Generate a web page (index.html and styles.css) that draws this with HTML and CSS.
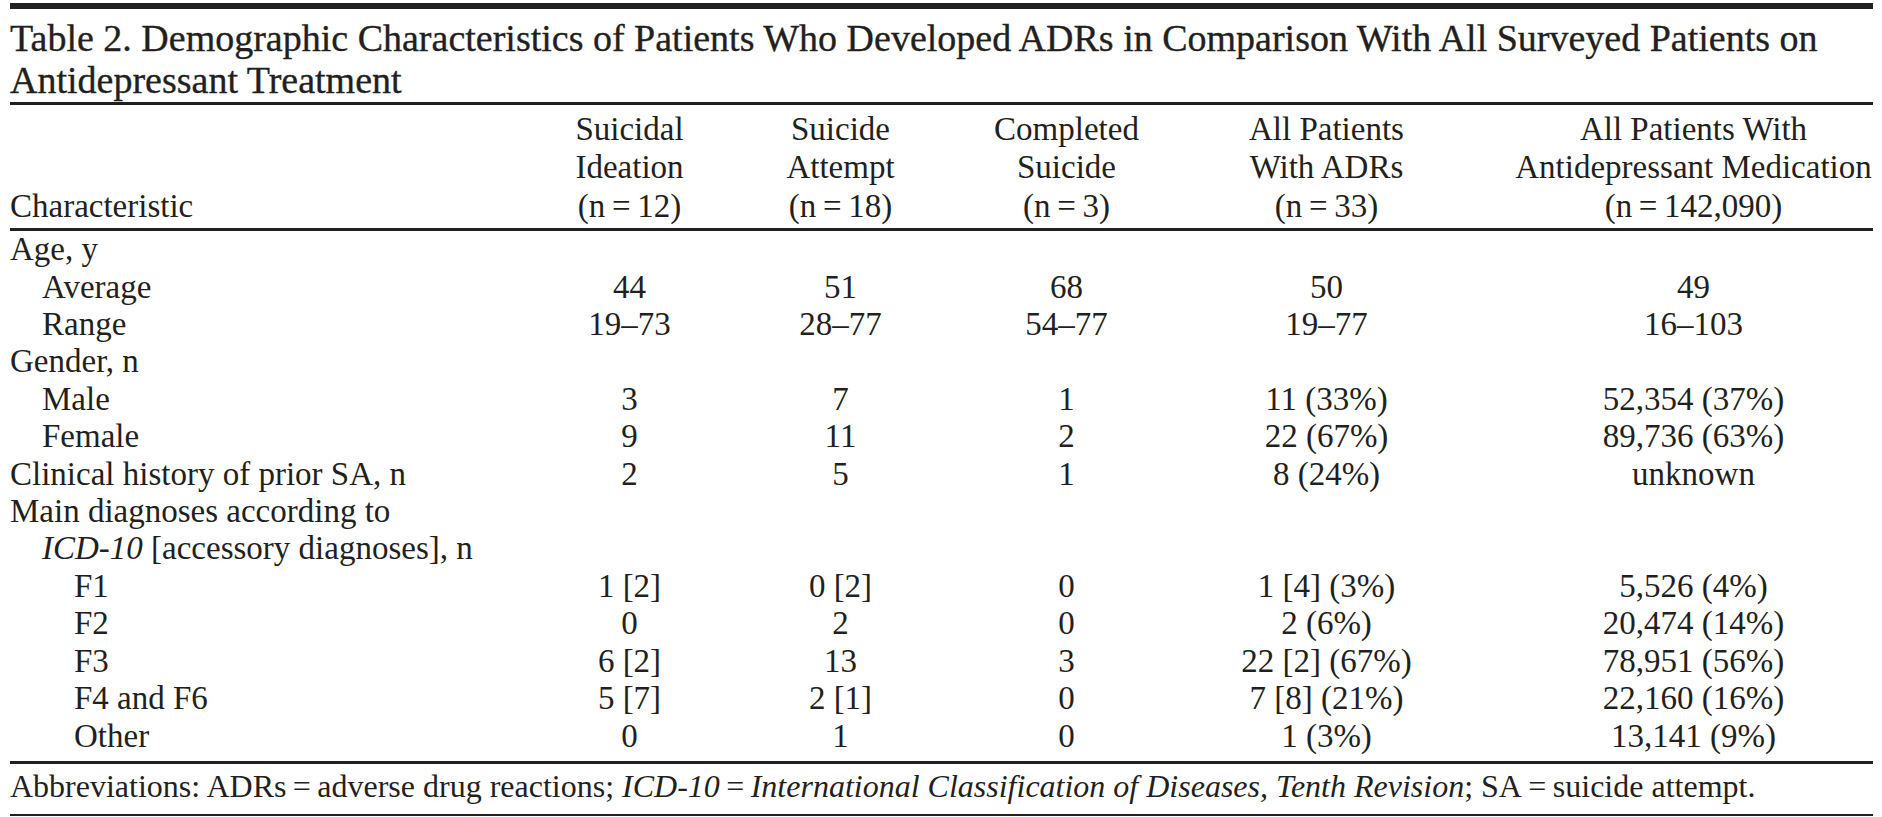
FILE: index.html
```html
<!DOCTYPE html>
<html lang="en">
<head>
<meta charset="utf-8">
<title>Table 2</title>
<link rel="stylesheet" href="styles.css">
</head>
<body>
<div class="sheet">
  <div class="bar"></div>
  <h1 class="title">Table 2. Demographic Characteristics of Patients Who Developed ADRs in Comparison With All Surveyed Patients on<br>Antidepressant Treatment</h1>
  <table class="data">
    <colgroup>
      <col class="w-char">
      <col class="w-si">
      <col class="w-sa">
      <col class="w-cs">
      <col class="w-adr">
      <col class="w-all">
    </colgroup>
    <thead>
      <tr>
        <th class="lbl">Characteristic</th>
        <th>Suicidal<br>Ideation<br>(n&#8201;=&#8201;12)</th>
        <th>Suicide<br>Attempt<br>(n&#8201;=&#8201;18)</th>
        <th>Completed<br>Suicide<br>(n&#8201;=&#8201;3)</th>
        <th>All Patients<br>With ADRs<br>(n&#8201;=&#8201;33)</th>
        <th class="c6">All Patients With<br>Antidepressant Medication<br>(n&#8201;=&#8201;142,090)</th>
      </tr>
    </thead>
    <tbody>
      <tr><td class="l0">Age, y</td><td></td><td></td><td></td><td></td><td class="c6"></td></tr>
      <tr><td class="l1">Average</td><td>44</td><td>51</td><td>68</td><td>50</td><td class="c6">49</td></tr>
      <tr><td class="l1">Range</td><td>19–73</td><td>28–77</td><td>54–77</td><td>19–77</td><td class="c6">16–103</td></tr>
      <tr><td class="l0">Gender, n</td><td></td><td></td><td></td><td></td><td class="c6"></td></tr>
      <tr><td class="l1">Male</td><td>3</td><td>7</td><td>1</td><td>11 (33%)</td><td class="c6">52,354 (37%)</td></tr>
      <tr><td class="l1">Female</td><td>9</td><td>11</td><td>2</td><td>22 (67%)</td><td class="c6">89,736 (63%)</td></tr>
      <tr><td class="l0">Clinical history of prior SA, n</td><td>2</td><td>5</td><td>1</td><td>8 (24%)</td><td class="c6">unknown</td></tr>
      <tr><td class="l0">Main diagnoses according to</td><td></td><td></td><td></td><td></td><td class="c6"></td></tr>
      <tr><td class="l1"><i>ICD-10</i> [accessory diagnoses], n</td><td></td><td></td><td></td><td></td><td class="c6"></td></tr>
      <tr><td class="l2">F1</td><td>1 [2]</td><td>0 [2]</td><td>0</td><td>1 [4] (3%)</td><td class="c6">5,526 (4%)</td></tr>
      <tr><td class="l2">F2</td><td>0</td><td>2</td><td>0</td><td>2 (6%)</td><td class="c6">20,474 (14%)</td></tr>
      <tr><td class="l2">F3</td><td>6 [2]</td><td>13</td><td>3</td><td>22 [2] (67%)</td><td class="c6">78,951 (56%)</td></tr>
      <tr><td class="l2">F4 and F6</td><td>5 [7]</td><td>2 [1]</td><td>0</td><td>7 [8] (21%)</td><td class="c6">22,160 (16%)</td></tr>
      <tr class="last"><td class="l2">Other</td><td>0</td><td>1</td><td>0</td><td>1 (3%)</td><td class="c6">13,141 (9%)</td></tr>
    </tbody>
    <tfoot>
      <tr><td colspan="6" class="note">Abbreviations: ADRs&#8201;=&#8201;adverse drug reactions; <i>ICD-10</i>&#8201;=&#8201;<i>International Classification of Diseases, Tenth Revision</i>; SA&#8201;=&#8201;suicide attempt.</td></tr>
    </tfoot>
  </table>
</div>
</body>
</html>
```

FILE: styles.css
```css
html, body {
  margin: 0;
  padding: 0;
  background: #ffffff;
}

.sheet {
  width: 1863px;
  padding: 3px 0 0 10px;
  font-family: "Liberation Serif", "Times New Roman", serif;
  color: #231f20;
}

.bar {
  height: 6px;
  background: #231f20;
}

.title {
  margin: 8px 0 0;
  font-size: 38px;
  line-height: 42px;
  font-weight: normal;
  -webkit-text-stroke: 0.35px #231f20;
}

.data {
  width: 1863px;
  margin-top: 1px;
  border-collapse: collapse;
  table-layout: fixed;
  font-size: 33px;
}

.w-char { width: 514px; }
.w-si { width: 211px; }
.w-sa { width: 211px; }
.w-cs { width: 241px; }
.w-adr { width: 279px; }
.w-all { width: 407px; }

.data thead tr {
  border-top: 3px solid #231f20;
  border-bottom: 3px solid #231f20;
}

.data th {
  padding: 5px 0 3px;
  font-weight: normal;
  line-height: 38.4px;
  text-align: center;
  vertical-align: bottom;
  white-space: nowrap;
}

.data th.lbl {
  text-align: left;
}

.data td {
  padding: 0;
  line-height: 37.4px;
  text-align: center;
  white-space: nowrap;
}

.data .c6 {
  padding-left: 48px;
}

.data td.l0 { text-align: left; }
.data td.l1 { text-align: left; padding-left: 32px; }
.data td.l2 { text-align: left; padding-left: 64px; }

.data tr.last td {
  padding-bottom: 6px;
}

.data tfoot tr {
  border-top: 3px solid #231f20;
  border-bottom: 2px solid #231f20;
}

.data td.note {
  text-align: left;
  font-size: 32px;
  line-height: 28px;
  padding: 8px 0 14px;
}
```
